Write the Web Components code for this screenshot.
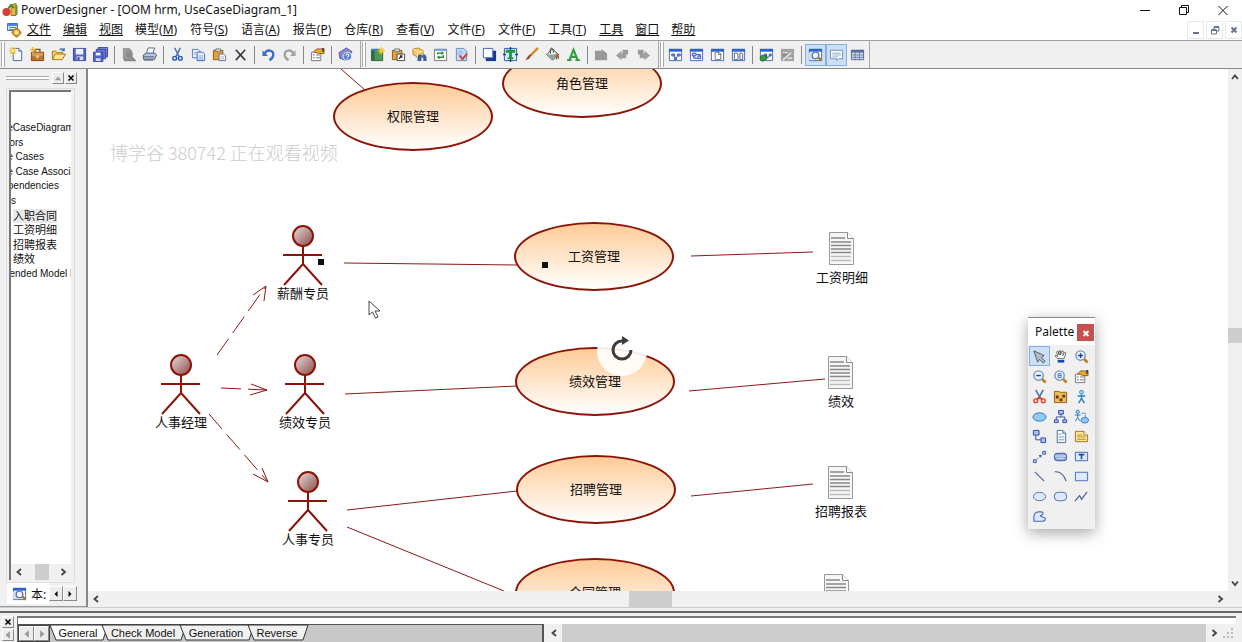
<!DOCTYPE html>
<html lang="zh-CN">
<head>
<meta charset="utf-8">
<title>PowerDesigner - [OOM hrm, UseCaseDiagram_1]</title>
<style>
html,body{margin:0;height:100%}
body{font-family:"Noto Sans","Noto Sans CJK SC",sans-serif;font-size:12px;color:#111;background:#f0f0f0;overflow:hidden}
</style>
</head>
<body>
<pd-app></pd-app>
<script>
const WIN = '<path d="M1.500 2.500h13v12h-13z" fill="#fff" stroke="#4a6cae"/><path d="M1 2h14v3H1z" fill="#2f62c8"/>';
const PAGE = '<path d="M4.500 1.500h6l3 3v10h-9z" fill="#f4f8ff" stroke="#4e6a92"/><path d="M10.500 1.500v3h3" fill="#cfdcf0" stroke="#4e6a92"/>';
const LENS = c => `<path d="M10 10l4.500 4.500" stroke="#b98324" stroke-width="3"/><circle cx="7" cy="7" r="5" fill="#eaf3ff" stroke="#7d93b5" stroke-width="1.500"/>${c}`;
const CLIP = '<path d="M1.500 3.500h10v10h-10z" fill="#e2a33a" stroke="#84591a"/><path d="M4 2h5v3H4z" fill="#d8d8d8" stroke="#666" stroke-width=".8"/>';
const ICONS = {
  app:'<path d="M9 3l5-1.500v12H9z" fill="#e9b73c" stroke="#94701c"/><path d="M13.500 3h2v10h-2z" fill="#5e9a45"/><path d="M5 8l4-5 3 3" fill="none" stroke="#3d8b37" stroke-width="2"/><circle cx="4.500" cy="10" r="4" fill="#d6402f"/>',
  model:'<path d="M1.500 1.500h10v7h-10z" fill="#d8e8fb" stroke="#4777b5"/><path d="M2 2h9v2H2z" fill="#4f86d6"/><path d="M3 5.500h7M3 7.500h7" stroke="#55a06a"/><circle cx="10.500" cy="10.500" r="3.500" fill="#f5cf62" stroke="#bd7c1c" stroke-width="1.500"/><circle cx="10.500" cy="10.500" r="1" fill="#fff"/><path d="M10.500 5.500v2M10.500 13.500v2M5.500 10.500h2M13.500 10.500h2" stroke="#bd7c1c" stroke-width="2"/>',
  'new':PAGE+'<path d="M4 0v8M0 4h8M1 1l6 6M7 1L1 7" stroke="#f3b51e" stroke-width="1.300"/><circle cx="4" cy="4" r="1.500" fill="#fff3a6"/>',
  project:'<path d="M1.500 5.500h13v9h-13z" fill="#b97432" stroke="#7b4718"/><path d="M5.500 5V2.500h5V5" fill="none" stroke="#7b4718" stroke-width="1.500"/><path d="M2 6h12v3L8 11 2 9z" fill="#d99a52"/><path d="M7 9h2v3H7z" fill="#f6dc8a"/><path d="M3 0v6M0 3h6" stroke="#f3b51e" stroke-width="1.500"/>',
  open:'<path d="M1.500 13.500v-9h4l1 1.500h6v3" fill="#f7d06a" stroke="#a87415"/><path d="M1.500 13.500l3-6h11l-3.500 6z" fill="#ffe596" stroke="#a87415"/><path d="M9 3c2-2 4-1 5 1m0-3v3h-3" fill="none" stroke="#3e6cae" stroke-width="1.300"/>',
  save:'<path d="M1.500 1.500h13v13h-13z" fill="#5462cc" stroke="#3a46a0"/><path d="M4 2h8v6H4z" fill="#edf2ff"/><path d="M5 10h7v4H5z" fill="#d5daf0"/><path d="M6 11h2v3H6z" fill="#2c378a"/>',
  saveall:'<path d="M5.500.500h10v10h-10z" fill="#7a86de" stroke="#3a46a0"/><path d="M3.500 2.500h10v10h-10z" fill="#6a76d4" stroke="#3a46a0"/><path d="M.500 5.500h10v10H.500z" fill="#5462cc" stroke="#3a46a0"/><path d="M3 6h5v3H3z" fill="#edf2ff"/><path d="M3 12h5v3H3z" fill="#d5daf0"/>',
  preview:'<path d="M2 1h7l3 3v9H2z" fill="#9b9b9b"/><path d="M3 14h11l-4-4" stroke="#8a8a8a" stroke-width="2.500" fill="none"/><circle cx="9" cy="8" r="3.500" fill="#8a8a8a"/>',
  print:'<path d="M4.500 7.500l2-6.500h7l-2 6.500z" fill="#f6faff" stroke="#5c6c8a"/><path d="M1.500 8.500l3-2h9l2 2-2 4.500h-12z" fill="#b9c6dc" stroke="#4a5878"/><path d="M2 10.500h11M2 14h10" stroke="#4a5878"/>',
  cut:'<path d="M5 1l4.500 9M11 1L6.500 10" stroke="#4671ad" stroke-width="1.500"/><circle cx="5" cy="12" r="2" fill="none" stroke="#1e55c0" stroke-width="1.500"/><circle cx="11" cy="12" r="2" fill="none" stroke="#1e55c0" stroke-width="1.500"/>',
  copy:'<path d="M1.500 2.500h6l2 2v7h-8z" fill="#eaf2ff" stroke="#5878b8"/><path d="M6.500 5.500h6l2 2v7h-8z" fill="#eaf2ff" stroke="#3e64b0"/><path d="M3 5.500h3M3 7.500h3M8 9.500h5M8 11.500h5M8 13h5" stroke="#7fa6e2"/>',
  paste:CLIP+'<path d="M7.500 7.500h5l2 2v5h-7z" fill="#fff" stroke="#5b6f98"/><path d="M9 10.500h4M9 12.500h4" stroke="#9cacc8"/>',
  del:'<path d="M3 3l10 11M13 3L3 14" stroke="#333" stroke-width="1.600"/>',
  undo:'<path d="M4 7c2-5 10-4 9 2-.500 3-2 4-4 5" fill="none" stroke="#3c6ccc" stroke-width="2.500"/><path d="M1.500 3.500v6h6z" fill="#3c6ccc"/>',
  redo:'<path d="M12 7C10 2 2 3 3 9c.500 3 2 4 4 5" fill="none" stroke="#a2a2a2" stroke-width="2.500"/><path d="M14.500 3.500v6h-6z" fill="#a2a2a2"/>',
  props:'<path d="M1.500 5.500h10v9h-10z" fill="#fff" stroke="#777"/><path d="M3 8.500h2M6.500 8.500h4M3 11.500h2M6.500 11.500h4" stroke="#667"/><path d="M4 5l3-3h8v5H9L7 6z" fill="#e6a92b" stroke="#765010" stroke-width=".8"/><path d="M13 1h2v4h-2z" fill="#444"/>',
  help:'<path d="M1 6l8-5 6 4-7 9-6-2z" fill="#8b86c9" stroke="#605aa2"/><circle cx="10" cy="10" r="4.500" fill="#5582dc" stroke="#eaf0ff"/><path d="M8.500 9c0-2 3-2 3 0 0 1-1.500 1-1.500 2M10 12v1" fill="none" stroke="#fff" stroke-width="1.200"/>',
  newdiag:'<path d="M1.500 2.500h12v12h-12z" fill="#4e965a" stroke="#29683a"/><path d="M2 3h3v11H2z" fill="#2d6d44"/><path d="M1 2h8v2H1z" fill="#4777cf"/><path d="M12 0v8M8 4h8M9.500 1.500l5 5M14.500 1.500l-5 5" stroke="#f4cc32" stroke-width="1.200"/>',
  pastelink:CLIP+'<path d="M6.500 7.500h8v7h-8z" fill="#fff" stroke="#445"/><path d="M8.500 12.500l3-3m-2 0h2v2" stroke="#222" fill="none" stroke-width="1.300"/>',
  find:'<path d="M1 2l6-1 5 3v7H6L1 8z" fill="#f2c45c" stroke="#ad7720" stroke-width=".8"/><path d="M1 2l5 3h6M6 5v6" stroke="#fff0bc" fill="none"/><path d="M7 8h3v7H6v-4zM12 8h2l1.500 3v4H12z" fill="#3c5c9e"/><path d="M10 10h2" stroke="#3c5c9e" stroke-width="2"/>',
  refresh:'<path d="M1.500 2.500h13v12h-13z" fill="#fff" stroke="#777"/><path d="M1 2h14v2H1z" fill="#6d93d8"/><path d="M5 8V6.500h5M11 8.500V11H6" stroke="#2b8b2b" stroke-width="1.500" fill="none"/><path d="M9 4.500l3 2-3 2zM7 9l-3 2 3 2z" fill="#2b8b2b"/>',
  check:'<path d="M2.500 1.500h8l3 3v10h-11z" fill="#c3dcfa" stroke="#6286bd"/><path d="M4 4.500h5M4 6.500h6M4 8.500h4" stroke="#8eb0e4"/><path d="M6 9l3 4 5-6" fill="none" stroke="#d2402c" stroke-width="2"/>',
  shadow:'<path d="M4 4h11v11H4z" fill="#1c3c90"/><path d="M1.500 1.500h10v10h-10z" fill="#fff" stroke="#3d62bc"/>',
  text:'<path d="M1.500 1.500h13v13h-13z" fill="#dce8ff" stroke="#2c55b3"/><path d="M3 3h10v3H9.500v5H11v2H5v-2h1.500V6H3z" fill="#1d9a33"/><path d="M0 8h3M13 8h3M8 13v3M8 0v3" stroke="#18367e" stroke-width="1.500"/>',
  brush:'<path d="M15 1L7 9" stroke="#d88b25" stroke-width="2.500"/><path d="M8 8l-2 4-4.500 2.500L4 10l2-2z" fill="#9b4128"/>',
  fill:'<path d="M8 2l6 6-6 6-6-6z" fill="#f3f3f3" stroke="#333"/><path d="M3 8h10l-5 5z" fill="#8ea0a0"/><path d="M6 7c-2-7 3-8 3-1" fill="none" stroke="#333"/><path d="M12 6c3 1 3 4 3 7-2-1-3-3-3-7z" fill="#d34438"/><path d="M11 8c2 1 2 3 2 6-2-1-2-3-2-6z" fill="#2a9a59"/>',
  font:'<path d="M3.500 14L8 3l4.500 11M5 10.500h6" fill="none" stroke="#2f9e42" stroke-width="2.200"/><path d="M1 14h5M10 14h5" stroke="#2f9e42" stroke-width="2"/>',
  up:'<path d="M1 4h7V2l6 5v7H1z" fill="#999"/>',
  back:'<path d="M1 9l6-5v3h5v5H7v2z" fill="#a0a0a0"/><path d="M8 3h6v5H8z" fill="#999"/>',
  fwd:'<path d="M15 9L9 4v3H4v5h5v2z" fill="#a0a0a0"/><path d="M2 3h6v5H2z" fill="#999"/>',
  w1:WIN+'<path d="M4 7.500h3v2H4zM10 7.500h3v2h-3zM7 11.500h2v2H7z" fill="#a8c4f4" stroke="#2852b4"/><path d="M6 9l2 3 3-3" stroke="#2852b4" fill="none"/>',
  w2:WIN+'<path d="M3.500 6.500h4v3h-4zM9.500 9.500h3v3h-3zM5 9v3h4M8 8h4v2" fill="#c6d8f8" stroke="#2852b4"/>',
  w3:WIN+'<path d="M5.500 5.500h4l2 2v6h-6z" fill="#fff" stroke="#60708e"/><path d="M9 5v3h3" stroke="#60708e" fill="none"/>',
  w4:WIN+'<path d="M3.500 6.500h3l1 1v6h-4zM9.500 6.500h2l1 1v6h-3z" fill="#fff" stroke="#405a8e"/>',
  w5:WIN+'<path d="M6 7.500h2v2H6zM11 7.500h2v2h-2zM8 9l1 3 3-3" fill="#c6d8f8" stroke="#2852b4"/><path d="M4 15a3 3 0 01-2-5 3 3 0 015 0l1-2v5z" fill="#33a233" stroke="#1c7420"/>',
  w6:'<path d="M1 2h14v13H1z" fill="#a2a2a2"/><path d="M3 6h4v4H3z" fill="#8a8a8a"/><path d="M3 6h5M3 14l9-8M8 12h5" stroke="#e2e2e2" stroke-width="1.500" fill="none"/>',
  wfind:WIN+'<path d="M1 6h4v8H1z" fill="#d0deef"/><circle cx="8" cy="9" r="3.500" fill="#eef6ff" stroke="#607baa" stroke-width="1.500"/><path d="M11 11l3.500 3.500" stroke="#ad7628" stroke-width="2.500"/>',
  output:'<path d="M1.500 3.500h13v9h-4l-2 2v-2h-7z" fill="#fff" stroke="#6d8cbb"/><path d="M3.500 6.500h9M3.500 8.500h9M3.500 10.500h6" stroke="#8fa9d0"/>',
  list:'<path d="M1.500 3.500h13v10h-13z" fill="#d3dcee" stroke="#58698c"/><path d="M1 3h14v3H1z" fill="#59709e"/><path d="M2 8.500h12M2 11h12M5.500 6v8M10 6v8" stroke="#6a7fa8"/>',
  pointer:'<path d="M2 2l11 5-3 2 4 4-2 2-4-4-2 3z" fill="#b4bcc8" stroke="#4d5a70"/>',
  hand:'<path d="M4.500 10L2 7.500l1-1 2 1.500-1-5 1.500-.500 1 4V2h1.500v4.500L9.500 2l1.500.500-.500 4.500 2-3.500 1.200.700L12 10z" fill="#fff" stroke="#333" stroke-width=".7"/><path d="M5 11.500h7v3H5z" fill="#1544b8"/>',
  zoomin:LENS('<path d="M4.500 7h5M7 4.500v5" stroke="#1d3b94" stroke-width="1.500"/>'),
  zoomout:LENS('<path d="M4.500 7h5" stroke="#1d3b94" stroke-width="1.500"/>'),
  zoomfit:LENS('<path d="M5 4.500h4v5H5z" fill="#3b70dd"/><path d="M6 6h2M6 8h2" stroke="#fff"/>'),
  scissors:'<path d="M4 1l5 9M12 1L7 10" stroke="#4776ae" stroke-width="1.700"/><path d="M8 9l-3 2M8 9l3 2" stroke="#dc3c24" stroke-width="2"/><circle cx="4" cy="12.500" r="2" fill="none" stroke="#dc3c24" stroke-width="1.500"/><circle cx="12" cy="12.500" r="2" fill="none" stroke="#dc3c24" stroke-width="1.500"/>',
  pkg:'<path d="M1.500 2.500h5l1 1h7v11h-13z" fill="#efbb55" stroke="#8b611d"/><path d="M3 7h3v3H3zM10 6h3v3h-3zM7 10h3v3H7z" fill="#5d3b18"/>',
  man:'<circle cx="8" cy="3.500" r="2" fill="#aee0ff" stroke="#2381bc"/><path d="M8 6v4M4 7.500h8M8 10l-3 5M8 10l3 5" stroke="#2381bc" stroke-width="1.500" fill="none"/>',
  usecase:'<ellipse cx="8" cy="8.500" rx="7" ry="4.500" fill="#8fcaf8" stroke="#2d78bc"/>',
  gen:'<path d="M6 1.500h5v4H6zM1.500 11.500h4v3h-4zM10.500 11.500h4v3h-4z" fill="#a9c2f4" stroke="#2a4aa2"/><path d="M3.500 11V8.500h9V11M8.500 5.500v3" fill="none" stroke="#2a4aa2"/>',
  assoc:'<circle cx="4" cy="3" r="1.700" fill="#aee0ff" stroke="#2d78bc"/><path d="M4 5v4M1 6.500h6M4 9l-2.500 4M4 9l2.500 4" stroke="#2d78bc" fill="none"/><path d="M8 4.500h4V9" stroke="#2d78bc" fill="none" stroke-dasharray="2 1"/><ellipse cx="11.500" cy="12" rx="4" ry="3" fill="#8fcaf8" stroke="#2d78bc"/>',
  dep:'<path d="M1.500 1.500h6v5h-6zM9.500 9.500h5v5h-5z" fill="#a9c2f4" stroke="#2a4aa2"/><path d="M4 7v4.500h5" stroke="#2a4aa2" fill="none"/>',
  file:PAGE+'<path d="M6 5.500h3M6 8.500h6M6 11.500h6" stroke="#7f96ba"/>',
  note:'<path d="M1.500 2.500h9l4 4v7h-13z" fill="#ffe59a" stroke="#9a7422"/><path d="M10.500 2.500v4h4" fill="#fff" stroke="#9a7422"/><path d="M3.500 6.500h5M3.500 8.500h9M3.500 11h9" stroke="#b98828"/>',
  link:'<path d="M1.500 11.500h3v3h-3zM11.500 2.500h3v3h-3z" fill="#c5d6f8" stroke="#3057aa"/><path d="M5 11l6-5" stroke="#3057aa" stroke-dasharray="2 1.500"/><path d="M7 6.500h3v3z" fill="#3057aa"/>',
  text2:'<rect x="1.500" y="4.500" width="13" height="8" rx="3" fill="#8fa9e0" stroke="#3c58a2"/><path d="M2 7.500h12M4 10h8" stroke="#dbe6ff"/>',
  tbox:'<path d="M1.500 3.500h13v9h-13z" fill="#dce9ff" stroke="#3c66b4"/><path d="M5 6h6M8 6v5" stroke="#1e4aa0" stroke-width="1.700"/>',
  line:'<path d="M3 3l10 10" stroke="#4b628e" stroke-width="1.200"/>',
  arc:'<path d="M2 3c7-.500 10 4 12 10" fill="none" stroke="#4b628e" stroke-width="1.200"/>',
  rect:'<path d="M1.500 3.500h13v9h-13z" fill="#dce9ff" stroke="#4a6cae"/>',
  ell:'<ellipse cx="8" cy="8" rx="6.500" ry="4.500" fill="#dce9ff" stroke="#4a6cae"/>',
  rrect:'<rect x="1.500" y="3.500" width="13" height="9" rx="4" fill="#dce9ff" stroke="#4a6cae"/>',
  poly:'<path d="M1 13l5-6 2 4 6-8" fill="none" stroke="#4b628e" stroke-width="1.200"/>',
  shape:'<path d="M2 13V9c0-4 2-6 5-6h3c3 0 2 4-1 4 0 2 4 1 5 3 1 2-1 3-3 3z" fill="#dce9ff" stroke="#4a6cae" stroke-width="1.200"/>',
  left:'<path d="M10 5L6.500 8 10 11" fill="none" stroke="#444" stroke-width="1.800"/>',
  right:'<path d="M6.500 5L10 8 6.500 11" fill="none" stroke="#444" stroke-width="1.800"/>',
  upa:'<path d="M5 10l3-3.500 3 3.500" fill="none" stroke="#444" stroke-width="1.800"/>',
  downa:'<path d="M5 6.500l3 3.500 3-3.500" fill="none" stroke="#444" stroke-width="1.800"/>',
  min:'<path d="M3 8.500h10" stroke="#111"/>',
  restore:'<path d="M3.500 5.500h7v7h-7zM5.500 5V3.500h7v7H11" fill="none" stroke="#111"/>',
  close:'<path d="M3.500 4l9 9M12.500 4l-9 9" stroke="#111"/>',
  mmin:'<path d="M5 11h6" stroke="#67748a" stroke-width="2"/>',
  mrest:'<path d="M4.500 8h5v4h-5zM7 8V5h5v4h-2" fill="none" stroke="#67748a"/><path d="M7 5h5M4.500 8h5" stroke="#67748a" stroke-width="2"/>',
  mclose:'<path d="M5.500 5.500l5 5M10.500 5.500l-5 5" stroke="#67748a" stroke-width="2"/>',
  x:'<path d="M4 4l8 8M12 4l-8 8" stroke="#000" stroke-width="2.500"/>',
  wx:'<path d="M5.500 6l5 5M10.500 6l-5 5" stroke="#fff" stroke-width="1.800"/>',
  tri:'<path d="M3 11.500h10L8 5.500z" fill="#999"/>',
  gl:'<path d="M11 2v12L4 8z" fill="#999"/>', gr:'<path d="M5 2v12l7-6z" fill="#999"/>',
  bl:'<path d="M10 4v8L6 8z" fill="#000"/>', br:'<path d="M6 4v8l4-4z" fill="#000"/>'
};
const svg = (n, s = 16) => `<svg width="${s}" height="${s}" viewBox="0 0 16 16" aria-hidden="true">${ICONS[n] || ''}</svg>`;
const BASE = `<style>*{box-sizing:border-box}svg{display:block;flex:none}button{font:inherit;color:inherit;border:0;padding:0;margin:0;background:none;display:flex;align-items:center;justify-content:center}`;
function define(name, render) {
  customElements.define(name, class extends HTMLElement {
    constructor() { super(); this.attachShadow({mode: 'open'}); }
    connectedCallback() { this.shadowRoot.innerHTML = render(this); }
  });
}
const attr = (e, k, d = '') => e.getAttribute(k) ?? d;

define('pd-tool', e => `${BASE}
:host{display:flex}
button{width:100%;height:100%;border:1px solid transparent}
:host([active]) button{background:#cbdff5;border-color:#86aede}
:host([raised]) button{background:#ececec;border-color:#fff #888 #888 #fff}
</style><button type="button" aria-label="${attr(e,'icon')}">${svg(attr(e,'icon'), attr(e,'size','16'))}</button>`);

define('pd-titlebar', () => `${BASE}
:host{display:flex;align-items:center;height:20px;background:#fff;padding-left:2px}
h1{font-size:12px;font-weight:400;margin:0 0 0 3px;flex:1;line-height:20px}
pd-tool{width:39px;height:20px}
</style>${svg('app')}<h1>PowerDesigner - [OOM hrm, UseCaseDiagram_1]</h1>
<pd-tool icon="min"></pd-tool><pd-tool icon="restore"></pd-tool><pd-tool icon="close"></pd-tool>`);

define('pd-menubar', () => {
  const items = ['文件','编辑','视图','模型M','符号S','语言A','报告P','仓库R','查看V','文件F','文件F','工具T','工具','窗口','帮助'];
  return `${BASE}
:host{display:flex;align-items:center;height:20px;background:#fff;padding-left:6px}
nav{display:flex;gap:12px;flex:1;margin-left:5px}
nav button{line-height:20px;white-space:nowrap;display:block}
nav button.key{padding-right:1px}
pd-tool{width:17px;height:18px;margin-left:2px;outline:1px solid #e8e8e8;outline-offset:-1px}
</style>${svg('model')}<nav>${items.map(t => t.length > 2 ? `<button class="key" type="button">${t.slice(0,2)}(<u>${t[2]}</u>)</button>` : `<button type="button"><u>${t}</u></button>`).join('')}</nav>
<pd-tool icon="mmin"></pd-tool><pd-tool icon="mrest"></pd-tool><pd-tool icon="mclose"></pd-tool>`;
});

define('pd-toolbar', () => {
  const groups = [
    'new project open save saveall | preview print | cut copy paste del | undo redo | props | help',
    'newdiag pastelink find refresh check | shadow text brush fill font | up back fwd',
    'w1 w2 w3 w4 | w5 w6 | wfind* output* list'];
  return `${BASE}
:host{display:flex;height:29px;background:#f0f0f0;border-top:1px solid #a0a0a0;border-bottom:1px solid #888}
.g{display:flex;align-items:center;padding-right:4px;border-right:1px solid #a8a8a8}
.g:last-child{padding-right:1px}
.grip{width:4px;height:25px;border:solid #aaa;border-width:0 1px;margin:0 1px;background:#fff}
pd-tool{width:21px;height:22px}
.sep{width:1px;height:18px;background:#888;margin:0 3px}
</style>${groups.map(g => `<div class="g"><span class="grip"></span>${g.split(' ').map(n => n === '|' ? '<span class="sep"></span>' : `<pd-tool size="15" icon="${n.replace('*','')}"${n.endsWith('*') ? ' active' : ''}></pd-tool>`).join('')}</div>`).join('')}`;
});

define('pd-scroll', e => {
  const v = e.hasAttribute('vertical');
  return `${BASE}
:host{display:flex;flex-direction:${v ? 'column' : 'row'};background:#f0f0f0;align-items:stretch}
pd-tool{flex:none;${v ? 'height:16px' : 'width:16px'}}
.track{flex:1;display:flex;flex-direction:${v ? 'column' : 'row'}}
.before{flex:${attr(e,'before')}}.thumb{flex:${attr(e,'thumb')};background:#cdcdcd}.after{flex:${attr(e,'after')}}
</style><pd-tool icon="${v ? 'upa' : 'left'}"></pd-tool><div class="track"><i class="before"></i><i class="thumb"></i><i class="after"></i></div><pd-tool icon="${v ? 'downa' : 'right'}"></pd-tool>`;
});

define('pd-browser', () => `${BASE}
:host{display:flex;flex-direction:column;width:86px;flex:none;padding:2px 9px 2px 6px;border-bottom:1px solid #999}
.head{display:flex;align-items:center;height:13px;gap:1px}
.grip{flex:1;height:4px;border:solid #aaa;border-width:1px 0;margin-right:2px;background:#fff}
.head pd-tool{width:12px;height:12px}
.frame{flex:1;display:flex;flex-direction:column;margin:4px 2px 0 0;padding:1px 3px 2px 2px;border:1px solid #ddd;min-height:0}
.box{flex:1;display:flex;flex-direction:column;border:solid #777;border-width:2px 0 0 2px;background:#fff;overflow:hidden;min-height:0}
.view{flex:1;overflow:hidden}
ul{list-style:none;margin:0;padding:0}
.tree{display:grid;grid-auto-rows:minmax(0,1fr);height:160px;margin:29px 0 0 -16px;font:10px/14px "Liberation Sans","Noto Sans CJK SC",sans-serif;white-space:nowrap}
li{display:flex;align-items:center}
li.child{padding-left:18px;font-size:11px}
mark{background:#e9e9e9;color:inherit}
pd-scroll{height:16px}
.tabs{display:flex;height:21px;margin-left:1px;align-items:stretch}
.tab{flex:1;background:#fff;padding-left:5px;gap:4px;justify-content:flex-start;white-space:nowrap;overflow:hidden;font-size:12px}
.tabs pd-tool{width:14px;margin-top:3px;height:15px}
</style><div class="head"><span class="grip"></span><pd-tool raised icon="tri" size="10"></pd-tool><pd-tool raised icon="x" size="10"></pd-tool></div>
<div class="frame"><div class="box"><div class="view"><ul class="tree">
<li>UseCaseDiagram_1</li><li>Actors</li><li>Use Cases</li><li>Use Case Associations</li><li>Dependencies</li><li>Files</li>
<li class="child"><mark>入职合同</mark></li><li class="child">工资明细</li><li class="child">招聘报表</li><li class="child">绩效</li><li>Extended Model Definitions</li></ul></div>
<pd-scroll before="9" thumb="15" after="6"></pd-scroll></div></div>
<div class="tabs"><button class="tab" type="button">${svg('wfind', 15)}<span>本:</span></button><pd-tool raised icon="bl" size="12"></pd-tool><pd-tool raised icon="br" size="12"></pd-tool></div>`);

define('uc-case', e => `${BASE}
:host{position:absolute;display:flex;align-items:center;justify-content:center;width:160px;height:69px;padding-bottom:2px;font-size:13px;line-height:20px;border:2px solid #8b1408;border-radius:50%;background:linear-gradient(#ffcb98,#fff)}
:host,*{box-sizing:border-box}
</style><slot></slot>`);

define('uc-actor', e => `${BASE}
:host{position:absolute;display:flex;flex-direction:column;align-items:center;width:60px;font-size:13px;line-height:14px;white-space:nowrap}
</style><svg width="42" height="61" viewBox="0 0 42 61"><defs><linearGradient id="h" x2="1" y2="1"><stop stop-color="#eadede"/><stop offset="1" stop-color="#8a4a46"/></linearGradient></defs>
<g stroke="#8b1408" stroke-width="2"><circle cx="21" cy="11" r="10" fill="url(#h)"/><path d="M21 21v19M1 30h39M21 39L2 60M21 39l19 21" fill="none"/></g></svg><slot></slot>`);

define('uc-file', e => `${BASE}
:host{position:absolute;display:flex;flex-direction:column;align-items:center;width:60px;gap:3px;font-size:13px;line-height:16px;white-space:nowrap}
</style><svg width="28" height="35" viewBox="0 0 28 35"><path d="M1.500 1.500h18l6 6v26h-24z" fill="#f6f6f6" stroke="#999"/><path d="M19.500 1.500v6h6" fill="#fff" stroke="#888"/><path d="M3 7h14M3 11h20M3 14.500h20M3 18h20M3 21.500h20" stroke="#888" stroke-width="1.500"/><path d="M3 25.500h20M3 29.500h20" stroke="#bbb" stroke-width="1.500"/></svg><slot></slot>`);

define('uc-palette', () => {
  const n = ['pointer','hand','zoomin','zoomout','zoomfit','props','scissors','pkg','man','usecase','gen','assoc','dep','file','note','link','text2','tbox','line','arc','rect','ell','rrect','poly','shape'];
  return `${BASE}
:host{position:absolute;width:67px;background:#f0f0f0;border-top:1px solid #888;box-shadow:0 4px 14px rgba(0,0,0,.35)}
header{display:flex;height:27px;background:#fff;align-items:center;justify-content:space-between;padding:0 1px 0 7px}
header pd-tool{width:17px;height:17px;background:#c64f50;margin-top:2px}
.grid{display:grid;grid-template-columns:repeat(3,21px);grid-auto-rows:20px;padding:1px 3px 3px 1px}
</style><header><span>Palette</span><pd-tool icon="wx"></pd-tool></header><div class="grid">${n.map((x,i) => `<pd-tool icon="${x}"${i ? '' : ' active'} size="15"></pd-tool>`).join('')}</div>`;
});

define('pd-canvas', () => {
  const cases = [[245,13,'权限管理'],[414,-20,'角色管理'],[426,153,'工资管理'],[427,278,'绩效管理'],[428,386,'招聘管理'],[427,489,'合同管理']];
  const actors = [[185,156,'薪酬专员'],[63,285,'人事经理'],[187,285,'绩效专员'],[190,402,'人事专员']];
  const files = [[724,162,'工资明细'],[723,286,'绩效'],[723,396,'招聘报表'],[719,504,'入职合同']];
  const at = ([x,y]) => `style="left:${x}px;top:${y}px"`;
  return `${BASE}
:host{display:block;position:relative;overflow:hidden;background:#fff}
.links{position:absolute;inset:0;width:100%;height:100%;fill:none;stroke:#8b1a14}
.water{position:absolute;left:22px;top:70px;font:300 18px/27px "Noto Sans CJK SC",sans-serif;color:#ccc;margin:0;white-space:nowrap}
.handle{position:absolute;width:6px;height:6px;background:#111}
.cursor{position:absolute;left:280px;top:231px}
.reload{position:absolute;left:509px;top:257px;width:50px;height:50px;padding-bottom:4px;border-radius:50%;background:rgba(255,255,255,.9)}
</style><svg class="links"><path d="M253 0l24 21M256 194l173 2M257 325l172-8M259 441l170-19M259 458l157 64M603 187l122-4M601 322l136-12M603 427l122-12"/>
<path stroke-dasharray="20 7" d="M129 286l49-69M133 319l46 2M121 345l59 68"/><path d="M165 226l13-9-2 15M163 315l16 6-17 5M165 405l15 8-6-14"/></svg>
<p class="water">博学谷 380742 正在观看视频</p>
${cases.map(c => `<uc-case ${at(c)}>${c[2]}</uc-case>`).join('')}${actors.map(c => `<uc-actor ${at(c)}>${c[2]}</uc-actor>`).join('')}${files.map(c => `<uc-file ${at(c)}>${c[2]}</uc-file>`).join('')}
<i class="handle" ${at([230,190])}></i><i class="handle" ${at([454,193])}></i>
<svg class="cursor" width="14" height="19"><path d="M1 1v14l3.500-3 3 6 2.500-1-3-6h5z" fill="#fff" stroke="#444"/></svg>
<button class="reload" type="button" aria-label="reload"><svg width="26" height="28" viewBox="0 0 26 28"><path d="M13 6a9 9 0 109 9" fill="none" stroke="#3c3c3c" stroke-width="3"/><path d="M13 1v9l7-4.500z" fill="#3c3c3c"/></svg></button>
<uc-palette ${at([940,248])}></uc-palette>`;
});

define('pd-workspace', () => `${BASE}
:host{display:flex;flex:1;min-height:0}
.doc{flex:1;min-width:0;display:grid;grid-template:minmax(0,1fr) 16px / minmax(0,1fr) 14px;border-left:2px solid #888}
</style><pd-browser></pd-browser><div class="doc"><pd-canvas></pd-canvas><pd-scroll vertical before="243" thumb="15" after="232"></pd-scroll><pd-scroll before="525" thumb="43" after="540"></pd-scroll></div>`);

define('pd-output', () => {
  const tabs = [['General',52],['Check Model',78],['Generation',68],['Reverse',54]];
  return `${BASE}
:host{display:flex;height:35px;border-top:1px solid #ccc;padding:3px 0 0 2px;background:linear-gradient(#f0f0f0 0 3px,#666 3px 5px,#f0f0f0 5px);font:11px "Liberation Sans",sans-serif}
.side{width:15px;padding-top:5px;display:flex;flex-direction:column;gap:1px}
.side pd-tool{width:12px;height:12px}
.box{flex:1;margin:5px 6px 0 0;display:flex;flex-direction:column;border:solid #777;border-width:2px 0 0 1px}
.text{height:7px;background:#fff}
.row{display:flex;flex:1}
.left{display:flex;width:526px;background:#c8c8c8;border:solid #555;border-width:1px 2px 0 0}
.nav{display:flex;border:1px solid #444}
.nav pd-tool{width:15px}
.tabs{display:flex;padding-left:2px}
.tab{position:relative;height:15px;white-space:nowrap}
.tab svg{position:absolute;inset:0;width:100%;height:100%;overflow:visible}
.tab span{position:relative}
.tab path{fill:#f0f0f0;stroke:#333}
.tab:first-child path{fill:#fff}
pd-scroll{flex:1;margin-left:2px}
.grip{width:14px;align-self:stretch}
</style><div class="side"><pd-tool raised icon="x" size="10"></pd-tool><pd-tool raised icon="gl" size="10"></pd-tool></div>
<div class="box"><div class="text"></div><div class="row"><div class="left"><div class="nav"><pd-tool raised icon="gl" size="10"></pd-tool><pd-tool raised icon="gr" size="10"></pd-tool></div>
<div class="tabs">${tabs.map(([t,w]) => `<button class="tab" type="button" style="width:${w}px"><svg><path d="M-2 0L4 15h${w - 5}l5-15z"/></svg><span>${t}</span></button>`).join('')}</div></div>
<pd-scroll before="0" thumb="645" after="0"></pd-scroll><svg class="grip" viewBox="0 0 14 15" height="15"><path d="M9 4h2v2H9zM5 8h2v2H5zM9 8h2v2H9zM1 12h2v2H1zM5 12h2v2H5zM9 12h2v2H9z" fill="#bbb"/></svg></div></div>`;
});

define('pd-app', () => `${BASE}
:host{display:flex;flex-direction:column;height:100vh;min-height:320px}
</style><pd-titlebar></pd-titlebar><pd-menubar></pd-menubar><pd-toolbar></pd-toolbar><pd-workspace></pd-workspace><pd-output></pd-output>`);
</script>
</body>
</html>
